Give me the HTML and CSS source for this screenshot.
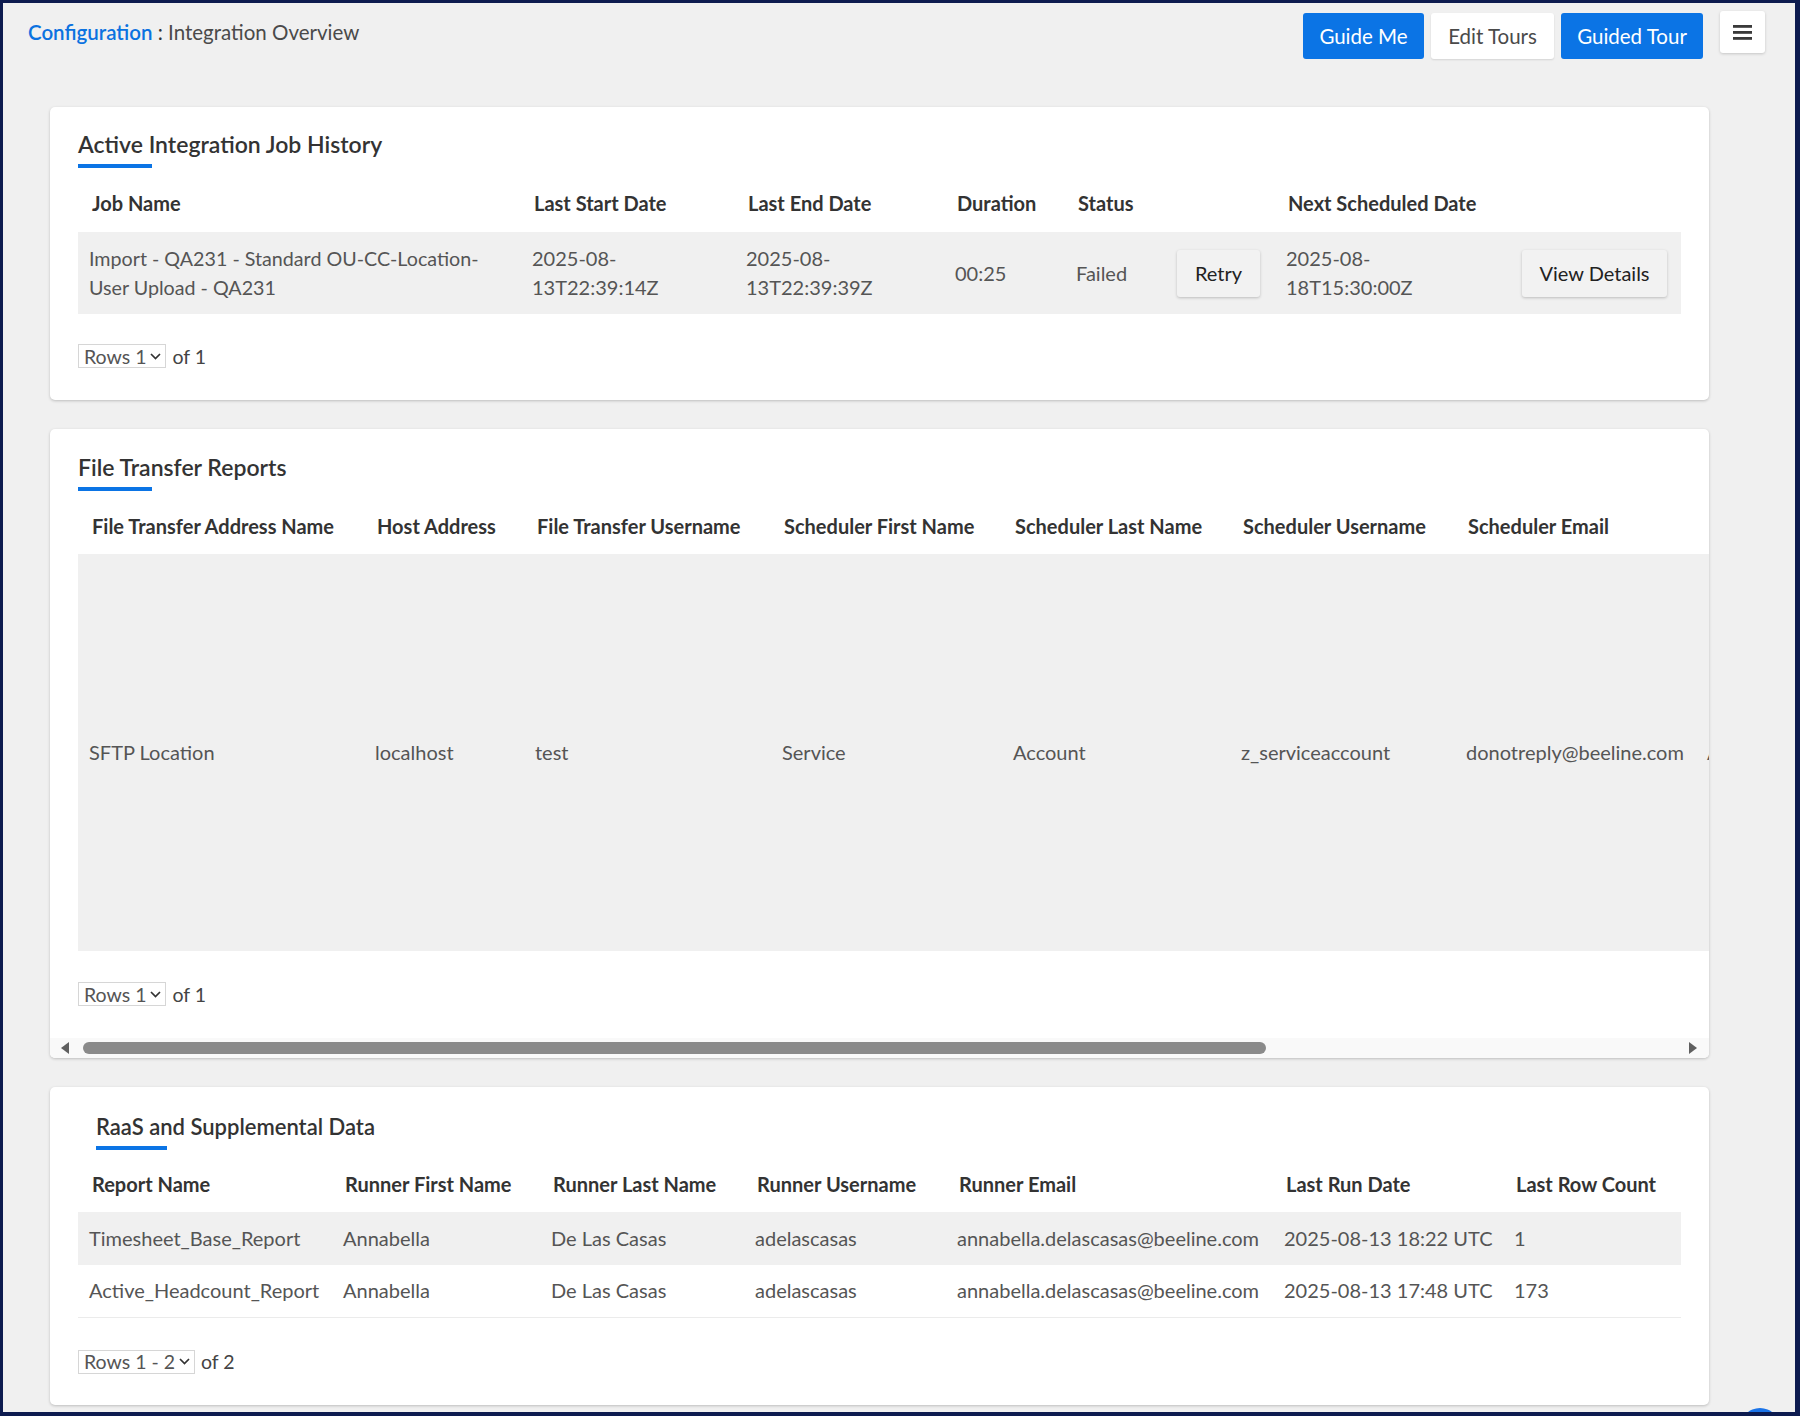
FILE: index.html
```html
<!DOCTYPE html>
<html lang="en">
<head>
<meta charset="utf-8">
<title>Integration Overview</title>
<link rel="stylesheet" href="styles.css">
</head>
<body>
<div class="frame">
  <header class="topbar">
    <div class="crumbs"><span class="crumb-link">Configuration</span><span class="crumb-sep"> : </span><span class="crumb-current">Integration Overview</span></div>
    <div class="actions">
      <button class="btn btn-primary btn-guide">Guide Me</button>
      <button class="btn btn-light btn-edit">Edit Tours</button>
      <button class="btn btn-primary btn-tour">Guided Tour</button>
      <button class="menu-btn" aria-label="Menu">
        <svg width="19" height="16" viewBox="0 0 19 16"><rect x="0" y="1" width="19" height="2.8" fill="#3a3a3a"/><rect x="0" y="7" width="19" height="2.8" fill="#3a3a3a"/><rect x="0" y="13" width="19" height="2.8" fill="#3a3a3a"/></svg>
      </button>
    </div>
  </header>

  <main class="content">
    <section class="card card-jobs">
      <div class="card-head">
        <h2>Active Integration Job History</h2>
        <div class="underline"></div>
      </div>
      <div class="table-wrap">
        <table class="grid jobs">
          <colgroup><col style="width:442px"><col style="width:214px"><col style="width:209px"><col style="width:121px"><col style="width:101px"><col style="width:109px"><col style="width:236px"><col style="width:171px"></colgroup>
          <thead>
            <tr><th>Job Name</th><th>Last Start Date</th><th>Last End Date</th><th>Duration</th><th>Status</th><th></th><th>Next Scheduled Date</th><th></th></tr>
          </thead>
          <tbody>
            <tr class="shade">
              <td class="first">Import - QA231 - Standard OU-CC-Location-<br>User Upload - QA231</td>
              <td>2025-08-<br>13T22:39:14Z</td>
              <td>2025-08-<br>13T22:39:39Z</td>
              <td>00:25</td>
              <td>Failed</td>
              <td><button class="row-btn btn-retry">Retry</button></td>
              <td>2025-08-<br>18T15:30:00Z</td>
              <td><button class="row-btn btn-view">View Details</button></td>
            </tr>
          </tbody>
        </table>
      </div>
      <div class="pager">
        <span class="rows-select">Rows 1 <svg width="11" height="7" viewBox="0 0 11 7"><polyline points="1,1 5.5,5.5 10,1" fill="none" stroke="#333" stroke-width="1.7"/></svg></span>
        <span class="of">of 1</span>
      </div>
    </section>

    <section class="card card-ft">
      <div class="card-head">
        <h2>File Transfer Reports</h2>
        <div class="underline"></div>
      </div>
      <div class="table-wrap scroll-x">
        <table class="grid ft">
          <colgroup><col style="width:285px"><col style="width:160px"><col style="width:247px"><col style="width:231px"><col style="width:228px"><col style="width:225px"><col style="width:241px"><col style="width:220px"></colgroup>
          <thead>
            <tr><th>File Transfer Address Name</th><th>Host Address</th><th>File Transfer Username</th><th>Scheduler First Name</th><th>Scheduler Last Name</th><th>Scheduler Username</th><th>Scheduler Email</th><th></th></tr>
          </thead>
          <tbody>
            <tr class="shade tall">
              <td class="first">SFTP Location</td>
              <td>localhost</td>
              <td>test</td>
              <td>Service</td>
              <td>Account</td>
              <td>z_serviceaccount</td>
              <td>donotreply@beeline.com</td>
              <td>Active</td>
            </tr>
          </tbody>
        </table>
      </div>
      <div class="pager pager-ft">
        <span class="rows-select">Rows 1 <svg width="11" height="7" viewBox="0 0 11 7"><polyline points="1,1 5.5,5.5 10,1" fill="none" stroke="#333" stroke-width="1.7"/></svg></span>
        <span class="of">of 1</span>
      </div>
      <div class="hscroll">
        <svg class="arrow-l" width="9" height="12" viewBox="0 0 9 12"><polygon points="9,0 9,12 1,6" fill="#5f5f5f"/></svg>
        <div class="thumb"></div>
        <div class="spacer"></div>
        <svg class="arrow-r" width="9" height="12" viewBox="0 0 9 12"><polygon points="0,0 0,12 8,6" fill="#5f5f5f"/></svg>
      </div>
    </section>

    <section class="card card-raas">
      <div class="card-head">
        <h2>RaaS and Supplemental Data</h2>
        <div class="underline"></div>
      </div>
      <div class="table-wrap">
        <table class="grid raas">
          <colgroup><col style="width:253px"><col style="width:208px"><col style="width:204px"><col style="width:202px"><col style="width:327px"><col style="width:230px"><col style="width:179px"></colgroup>
          <thead>
            <tr><th>Report Name</th><th>Runner First Name</th><th>Runner Last Name</th><th>Runner Username</th><th>Runner Email</th><th>Last Run Date</th><th>Last Row Count</th></tr>
          </thead>
          <tbody>
            <tr class="shade r1">
              <td class="first">Timesheet_Base_Report</td>
              <td>Annabella</td>
              <td>De Las Casas</td>
              <td>adelascasas</td>
              <td>annabella.delascasas@beeline.com</td>
              <td>2025-08-13 18:22 UTC</td>
              <td>1</td>
            </tr>
            <tr class="r2">
              <td class="first">Active_Headcount_Report</td>
              <td>Annabella</td>
              <td>De Las Casas</td>
              <td>adelascasas</td>
              <td>annabella.delascasas@beeline.com</td>
              <td>2025-08-13 17:48 UTC</td>
              <td>173</td>
            </tr>
          </tbody>
        </table>
      </div>
      <div class="pager pager-raas">
        <span class="rows-select">Rows 1 - 2 <svg width="11" height="7" viewBox="0 0 11 7"><polyline points="1,1 5.5,5.5 10,1" fill="none" stroke="#333" stroke-width="1.7"/></svg></span>
        <span class="of">of 2</span>
      </div>
    </section>
  </main>

  <div class="help-bubble"></div>
</div>
</body>
</html>
```

FILE: styles.css
```css
* { box-sizing: border-box; }

html, body {
  margin: 0;
  padding: 0;
  background: #0d1b4f;
}

body {
  font-family: "Lato", "Liberation Sans", sans-serif;
  color: #555;
}

.frame {
  position: relative;
  width: 1800px;
  height: 1416px;
  border-style: solid;
  border-color: #0d1b4f;
  border-width: 3px 5px 4px 3px;
  background: #f0f0f0;
  overflow: hidden;
}

/* ---------- top bar ---------- */
.topbar {
  height: 104px;
  display: flex;
  justify-content: space-between;
  align-items: flex-start;
  padding: 10px 30px 0 25px;
}

.crumbs {
  margin-top: 7px;
  font-size: 20.5px;
  line-height: 24px;
  color: #4a4a4a;
}

.crumb-link {
  color: #0b72e0;
  font-weight: 600;
}

.crumb-sep {
  color: #333;
}

.actions {
  display: flex;
  align-items: flex-start;
  gap: 7px;
}

.btn {
  height: 46px;
  border: none;
  border-radius: 3px;
  font-family: inherit;
  font-size: 20.5px;
  padding: 0 14px;
  cursor: pointer;
}

.btn-guide { width: 121px; }
.btn-edit { width: 123px; }
.btn-tour { width: 142px; }

.btn-primary {
  background: #0b74e5;
  color: #fff;
}

.btn-light {
  background: #fff;
  color: #4a4a4a;
  box-shadow: 0 1px 2px rgba(0, 0, 0, 0.12);
}

.menu-btn {
  width: 45px;
  height: 42px;
  margin-top: -2px;
  margin-left: 10px;
  border: none;
  border-radius: 3px;
  background: #fff;
  box-shadow: 0 1px 3px rgba(0, 0, 0, 0.18);
  display: flex;
  align-items: center;
  justify-content: center;
  padding: 0;
}

/* ---------- cards ---------- */
.content {
  display: flex;
  flex-direction: column;
  gap: 29px;
  padding-left: 47px;
}

.card {
  width: 1659px;
  background: #fff;
  border-radius: 5px;
  box-shadow: 0 1px 3px rgba(0, 0, 0, 0.22);
  overflow: hidden;
}

.card-head {
  padding: 23px 28px 0;
}

.card-head h2 {
  margin: 0;
  font-size: 23px;
  line-height: 28px;
  font-weight: 600;
  color: #333;
}

.underline {
  width: 74px;
  height: 4px;
  margin-top: 6px;
  background: #0b74e5;
}

.card-ft .card-head { padding-top: 24px; }

.card-raas .card-head { padding: 26px 46px 0; }
.card-raas .card-head h2 { font-size: 22px; }
.card-raas .underline { width: 71px; margin-top: 5px; }

.table-wrap {
  margin: 6px 28px 0;
}

.scroll-x {
  margin-right: 0;
  overflow: hidden;
}

.grid {
  border-collapse: collapse;
  table-layout: fixed;
  font-size: 20px;
}

.jobs { width: 1603px; }
.ft { width: 1837px; }
.raas { width: 1603px; }

.grid th {
  height: 58px;
  padding: 0 0 0 14px;
  text-align: left;
  font-weight: 700;
  color: #333;
  white-space: nowrap;
  vertical-align: middle;
}

.ft th { height: 57px; }
.raas th { height: 56px; }

.grid td {
  padding: 0 0 0 12px;
  color: #555;
  line-height: 29px;
  vertical-align: middle;
  white-space: nowrap;
}

.jobs td.first { font-size: 19.7px; }
.grid td.first { padding-left: 11px; }

.shade td { background: #f0f0f0; }

.jobs tbody td { height: 82px; }
.ft .tall td { height: 397px; }
.raas .r1 td { height: 53px; }
.raas .r2 td { height: 52px; border-bottom: 1px solid #ebebeb; }

.row-btn {
  height: 47px;
  border: none;
  border-radius: 3px;
  background: #f2f2f2;
  box-shadow: 0 1px 3px rgba(0, 0, 0, 0.22);
  font-family: inherit;
  font-size: 20px;
  color: #222;
  padding: 0;
}

.btn-retry { width: 83px; }
.btn-view { width: 145px; }

/* ---------- pagination ---------- */
.pager {
  display: flex;
  align-items: center;
  gap: 6px;
  margin: 30px 28px 0;
  padding-bottom: 32px;
  font-size: 19.5px;
}

.rows-select {
  display: inline-flex;
  align-items: center;
  gap: 4px;
  height: 24px;
  padding: 0 4px 0 5px;
  border: 1px solid #d6d6d6;
  background: #fff;
  color: #555;
}

.of {
  color: #444;
}

.pager-ft { margin-top: 31px; padding-bottom: 32px; }
.pager-raas { margin-top: 32px; padding-bottom: 31px; }

/* ---------- fake horizontal scrollbar ---------- */
.hscroll {
  height: 20px;
  display: flex;
  align-items: center;
  background: #f9f9f9;
  padding: 0 11px 0 10px;
}

.arrow-l { flex: none; }

.thumb {
  flex: none;
  width: 1183px;
  height: 12px;
  margin-left: 14px;
  border-radius: 6px;
  background: #8a8a8a;
}

.spacer { flex: 1; }

.arrow-r { flex: none; }

/* ---------- floating help bubble ---------- */
.help-bubble {
  position: absolute;
  left: 1737px;
  top: 1405px;
  width: 40px;
  height: 40px;
  border-radius: 50%;
  background: #1a73e8;
}
```
